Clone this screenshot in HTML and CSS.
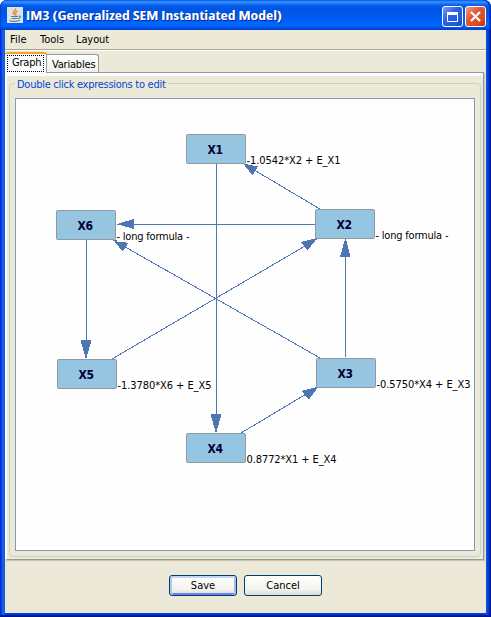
FILE: index.html
```html
<!DOCTYPE html>
<html lang="en">
<head>
<meta charset="utf-8">
<title>IM3 (Generalized SEM Instantiated Model)</title>
<link rel="stylesheet" href="styles.css">
</head>
<body>
<div class="window">
  <header class="titlebar">
    <svg class="java" width="16" height="16" viewBox="0 0 16 16">
      <path d="M0 0h16v16H0z" fill="#dfe3e6"/>
      <path d="M8.500 1.500c1 2-3 2.800-2.300 4.700.3.900 1.300 1.200 1.300 2M10.500 4c-2 1-2.800 1.900-1.700 3.200.4.500.2.900-.3 1.300" fill="none" stroke="#e8872c" stroke-width="1.400"/>
      <path d="M4 9.500h7M4.500 11.500h6M2.500 13.500c2.500 1.300 8 1.200 10.500-.2M11.500 9c3-.2 2.200 2.200-.5 2.500" fill="none" stroke="#547f9c" stroke-width="1.100"/>
    </svg>
    <svg class="caption" width="270" height="22">
      <g font-family="Open Sans, sans-serif" font-weight="700" font-size="13">
        <text x="1" y="16" textLength="256" lengthAdjust="spacingAndGlyphs" fill="#082a88">IM3 (Generalized SEM Instantiated Model)</text>
        <text x="0" y="15" textLength="256" lengthAdjust="spacingAndGlyphs" fill="#fff">IM3 (Generalized SEM Instantiated Model)</text>
      </g>
    </svg>
    <div class="controls">
      <button class="ctl max" aria-label="Maximize"><svg width="19" height="19"><path d="M4.500 5.500h10v9h-10z" fill="none" stroke="#fff"/><path d="M4 5h11v3H4z" fill="#fff"/></svg></button>
      <button class="ctl close" aria-label="Close"><svg width="19" height="19"><path d="M5 5l9 9M14 5l-9 9" stroke="#fff" stroke-width="2.200"/></svg></button>
    </div>
  </header>
  <main class="client">
    <nav class="menu"><span class="file">File</span><span class="tools">Tools</span><span class="layout">Layout</span></nav>
    <div class="tabs">
      <div class="tab active"><span>Graph</span></div>
      <div class="tab"><span>Variables</span></div>
    </div>
    <section class="panel">
      <fieldset class="group">
        <legend>Double click expressions to edit</legend>
        <svg class="graph" viewBox="15 98 460 453" width="460" height="453">
          <rect class="canvas" x="15.500" y="98.500" width="459" height="452"/>
          <g class="edges">
            <path d="M216.500 164V432M315 224.500H117M86.500 240V358M345.500 357V239"/>
            <path d="M320 209L244 164M320 358L113 240M112 359L317 239M241 433L318 387"/>
          </g>
          <g class="heads">
            <path d="M210.500 414h11l-5 18h-1z"/>
            <path d="M243 163.500l15 3-5.500 9z"/>
            <path d="M117 224l17-5v10z"/>
            <path d="M113 239.500l15.500 3.500-6 8.500z"/>
            <path d="M80.500 340h11l-5 18h-1z"/>
            <path d="M317.500 238l-16.500 4 6.500 8.500z"/>
            <path d="M340 257h10.500l-4.500-18h-1z"/>
            <path d="M318.500 386.500l-17 4.500 7.500 8.500z"/>
          </g>
          <g class="nodes">
            <rect x="186.500" y="134.500" width="59" height="29" rx="1"/>
            <rect x="56.500" y="210.500" width="59" height="29" rx="1"/>
            <rect x="315.500" y="209.500" width="59" height="29" rx="1"/>
            <rect x="57.500" y="359.500" width="59" height="29" rx="1"/>
            <rect x="316.500" y="358.500" width="59" height="29" rx="1"/>
            <rect x="186.500" y="433.500" width="59" height="29" rx="1"/>
          </g>
          <g class="names">
            <text x="207.500" y="154" textLength="15.500">X1</text>
            <text x="77.500" y="230" textLength="15.500">X6</text>
            <text x="336.500" y="229" textLength="15.500">X2</text>
            <text x="78.500" y="379" textLength="15.500">X5</text>
            <text x="337.500" y="378" textLength="15.500">X3</text>
            <text x="207.500" y="453" textLength="15.500">X4</text>
          </g>
          <g class="plates">
            <path d="M247 153h94v11h-94zM117 230h73v12h-73zM376 228h73v14h-73zM118 378h94v14h-94zM377 377h94v14h-94zM247 452h90v14h-90z"/>
          </g>
          <g class="formulas">
            <text x="246.500" y="164" textLength="94">-1.0542*X2 + E_X1</text>
            <text x="116.500" y="240" textLength="73">- long formula -</text>
            <text x="375.500" y="239" textLength="73">- long formula -</text>
            <text x="117.500" y="389" textLength="94">-1.3780*X6 + E_X5</text>
            <text x="376.500" y="388" textLength="94">-0.5750*X4 + E_X3</text>
            <text x="246.500" y="463" textLength="90">0.8772*X1 + E_X4</text>
          </g>
        </svg>
      </fieldset>
    </section>
    <footer class="actions">
      <button class="btn save">Save</button>
      <button class="btn cancel">Cancel</button>
    </footer>
  </main>
</div>
</body>
</html>
```
FILE: styles.css
```css
* { box-sizing: border-box; }
body {
  margin: 0;
  background: #fff;
  font: 11px/13px "DejaVu Sans Condensed", "DejaVu Sans", sans-serif;
  font-stretch: condensed;
  color: #000;
}
.window {
  width: 491px;
  height: 617px;
  padding: 0 5px 4px;
  display: flex;
  flex-direction: column;
  border-radius: 7px 7px 0 0;
  background:
    linear-gradient(90deg, #0019cf, #0831d9 1px, #166aee 3px, #0855dd 5px, transparent 5px) 0 30px / 5px 100% no-repeat,
    linear-gradient(90deg, #0855ee, #0441d8 2px, #001da0 4px, #00138c 5px) 100% 30px / 5px 100% no-repeat,
    #003dd7;
  box-shadow: inset 0 -1px #00138c, inset 0 -2px #001ea0;
}
.titlebar {
  flex: none;
  height: 30px;
  margin: 0 -5px;
  padding: 0 5px 0 7px;
  display: flex;
  border-radius: 7px 7px 0 0;
  background: linear-gradient(#0058e6 0, #3a93ff 2px, #2a80f8 3px, #0661ee 5px, #0055e5 8px, #0055e5 13px, #005df5 19px, #0066ff 25px, #005bf0 27px, #0046cf 29px, #003dd7 30px);
  box-shadow: inset 1px 0 #0841c8, inset -2px 0 #0030b8;
}
.java { margin-top: 7px; flex: none; }
.caption { margin: 5px 0 0 3px; }
.controls { margin: 6px 0 0 auto; display: flex; gap: 2px; }
.ctl {
  width: 21px;
  height: 21px;
  padding: 0;
  border: 1px solid #fff;
  border-radius: 3px;
  background: linear-gradient(135deg, #7ba0f4, #2d62e4 40%, #2459e0 75%, #1547b8);
}
.ctl svg { display: block; }
.close { background: linear-gradient(135deg, #f09a80, #e05a34 40%, #dc4a20 75%, #b83008); }
.client { flex: 1; display: flex; flex-direction: column; background: #ece9d8; }
.menu {
  height: 21px;
  padding: 3px 5px;
  display: flex;
  border-bottom: 1px solid #fff;
  box-shadow: inset 0 -1px #aca899;
}
.file { width: 30px; }
.tools { width: 36px; }
.layout { letter-spacing: -.1px; }
.tabs { height: 21px; margin-top: 1px; display: flex; align-items: flex-end; position: relative; z-index: 1; }
.tab {
  width: 52px;
  height: 18px;
  margin-bottom: 1px;
  padding: 3px 0 0 5px;
  border: 1px solid #919b9c;
  border-width: 1px 1px 0 0;
  border-radius: 0 3px 0 0;
  background: linear-gradient(#fff, #f0f0ea);
  letter-spacing: -.2px;
}
.tab.active {
  width: 42px;
  height: 21px;
  margin: 0;
  padding: 1px;
  border: 0;
  border-top: 2px solid #f5a623;
  border-right: 1px solid #919b9c;
  border-radius: 3px 3px 0 0;
  background: #fcfcfe;
}
.tab.active span { display: block; height: 17px; margin: 0 1px 0 1px; padding: 0 0 0 4px; border: 1px dotted #000; }
.panel {
  height: 488px;
  margin: -1px 2px 0 0;
  padding: 4px 2px 2px 2px;
  border: 1px solid #919b9c;
  border-left: 2px solid #fcfcfe;
  box-shadow: inset 0 3px #fcfcfe, 1px 1px 1px #cbc7b8;
}
.group {
  width: 472px;
  height: 480px;
  margin: 0;
  padding: 8px 5px 5px;
  border: 1px solid #d0d0bf;
  border-radius: 4px;
}
.group legend { height: 13px; line-height: 16px; margin-left: 0; padding: 0 2px; color: #0046d5; letter-spacing: -.27px; }
.graph { display: block; }
.canvas { fill: #fefefe; stroke: #7f9db9; }
.edges { fill: none; stroke: #4d76b3; shape-rendering: crispEdges; }
.heads { fill: #4d76b3; shape-rendering: crispEdges; }
.nodes { fill: #96c5e2; stroke: #9098a0; }
.names { fill: #000033; font-size: 12px; font-weight: 700; }
.plates { fill: #fff; }
.formulas { fill: #000; }
.actions { flex: 1; padding-top: 15px; display: flex; justify-content: center; gap: 7px; align-items: flex-start; }
.btn {
  height: 21px;
  padding: 0;
  border: 1px solid #003c74;
  border-radius: 3px;
  background: linear-gradient(#fff, #f4f3ee 70%, #dedbd0);
  font: inherit;
}
.save { width: 68px; box-shadow: inset 0 2px #c2d6f6, inset 2px 0 #b0c8f2, inset -2px 0 #a0bcf0, inset 0 -2px #6982ee; }
.cancel { width: 78px; }
```
